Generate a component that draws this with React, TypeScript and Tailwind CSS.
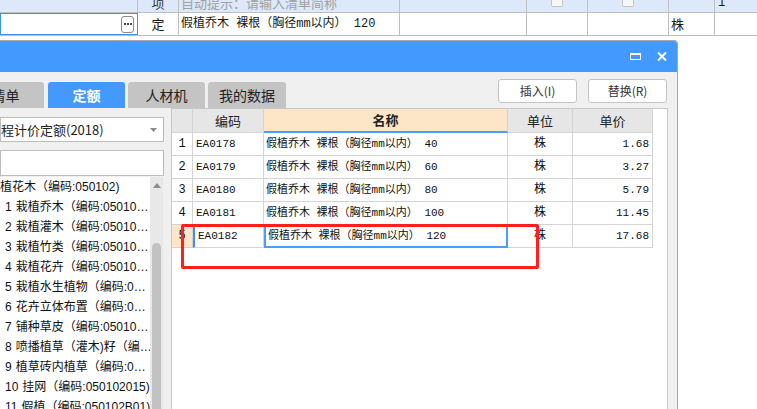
const cjk = "font-['Noto_Sans_CJK_SC',sans-serif]";
const mono = "font-['Liberation_Mono','Noto_Sans_CJK_SC',monospace]";

const rows = [
  { code: "EA0178", size: "40", price: "1.68" },
  { code: "EA0179", size: "60", price: "3.27" },
  { code: "EA0180", size: "80", price: "5.79" },
  { code: "EA0181", size: "100", price: "11.45" },
  { code: "EA0182", size: "120", price: "17.68" },
];

const tree = [
  { no: "", text: "植花木（编码:050102)" },
  { no: "1", text: "栽植乔木（编码:05010…" },
  { no: "2", text: "栽植灌木（编码:05010…" },
  { no: "3", text: "栽植竹类（编码:05010…" },
  { no: "4", text: "栽植花卉（编码:05010…" },
  { no: "5", text: "栽植水生植物（编码:0…" },
  { no: "6", text: "花卉立体布置（编码:0…" },
  { no: "7", text: "铺种草皮（编码:05010…" },
  { no: "8", text: "喷播植草（灌木)籽（编…" },
  { no: "9", text: "植草砖内植草（编码:0…" },
  { no: "10", text: "挂网（编码:050102015)" },
  { no: "11", text: "假植（编码:050102B01)" },
];

function Sheet() {
  return (
    <div className={`${cjk} text-[13px]`}>
      <div className="flex h-[13px] border-b border-[#c0c0c0] bg-[#dde8fb]">
        <div className="w-[138px] border-r border-[#c0c0c0]" />
        <div className="w-[41px] overflow-hidden border-r border-[#c0c0c0] text-center">
          <span className="-mt-[4px] block leading-[14px] text-[#333]">项</span>
        </div>
        <div className="w-[221px] overflow-hidden whitespace-nowrap border-r border-[#c0c0c0] pl-[2px]">
          <span className="-mt-[4px] block leading-[14px] text-[#a0a0a0]">自动提示：请输入清单简称</span>
        </div>
        <div className="w-[127px] border-r border-[#c0c0c0]" />
        <div className="w-[61px] overflow-hidden border-r border-[#c0c0c0] pl-[24px]">
          <div className="h-[7px] w-[12px] rounded-b-[2px] border border-t-0 border-[#c4c4c4] bg-[#f6f6f6]" />
        </div>
        <div className="w-[81px] overflow-hidden border-r border-[#c0c0c0] pl-[34px]">
          <div className="h-[7px] w-[12px] rounded-b-[2px] border border-t-0 border-[#c4c4c4] bg-[#f6f6f6]" />
        </div>
        <div className="w-[46px] border-r border-[#c0c0c0]" />
        <div className="flex-1 overflow-hidden pl-[3px]">
          <span className={`${mono} -mt-[4px] block text-[12px] leading-[14px]`}>1</span>
        </div>
      </div>
      <div className="flex h-[23px] border-b border-[#c0c0c0]">
        <div className="flex w-[138px] items-center justify-end border border-[#3d8ef5] pr-[3px]">
          <div className="flex h-[17px] w-[13px] items-center justify-center gap-[1px] rounded-[3px] border border-[#8a8a8a] bg-white">
            <span className="h-[2px] w-[2px] bg-[#444]" />
            <span className="h-[2px] w-[2px] bg-[#444]" />
            <span className="h-[2px] w-[2px] bg-[#444]" />
          </div>
        </div>
        <div className="flex w-[41px] items-center justify-center border-r border-[#c0c0c0]">定</div>
        <div className={`${mono} flex w-[221px] items-center whitespace-nowrap border-r border-[#c0c0c0] pl-[2px] text-[12px]`}>
          假植乔木 裸根（胸径mm以内） 120
        </div>
        <div className="w-[127px] border-r border-[#c0c0c0]" />
        <div className="w-[61px] border-r border-[#c0c0c0]" />
        <div className="w-[81px] border-r border-[#c0c0c0]" />
        <div className="flex w-[46px] items-center border-r border-[#c0c0c0] pl-[2px]">株</div>
        <div className="flex-1" />
      </div>
    </div>
  );
}

function Tabs() {
  return (
    <div className={`${cjk} flex h-[36px] justify-between pr-[10px]`}>
      <div className="flex items-end text-[14px]">
        <div className="-ml-[33px] flex h-[26px] w-[77px] items-center justify-center rounded-t-[3px] bg-[#c4c4c4] text-[#222]">清单</div>
        <div className="ml-[4px] flex h-[26px] w-[77px] items-center justify-center rounded-t-[3px] bg-[#4499ff] font-bold text-white">定额</div>
        <div className="ml-[3px] flex h-[26px] w-[77px] items-center justify-center rounded-t-[3px] bg-[#c4c4c4] text-[#222]">人材机</div>
        <div className="ml-[3px] flex h-[26px] w-[78px] items-center justify-center rounded-t-[3px] bg-[#c4c4c4] text-[#222]">我的数据</div>
      </div>
      <div className="mt-[7px] flex gap-[11px] text-[12px] text-[#333]">
        <button className="h-[24px] w-[79px] rounded-[3px] border border-[#c4c4c4] bg-white">插入(I)</button>
        <button className="h-[24px] w-[79px] rounded-[3px] border border-[#c4c4c4] bg-white">替换(R)</button>
      </div>
    </div>
  );
}

function LeftPanel() {
  return (
    <div className="flex w-[164px] flex-col">
      <div className={`${cjk} mt-[9px] flex h-[25px] items-center justify-between border border-[#bdbdbd] bg-white pr-[6px] text-[13px] text-[#222]`}>
        <span className="whitespace-nowrap">程计价定额(2018)</span>
        <svg width="7" height="4" viewBox="0 0 7 4">
          <path d="M0 0 H7 L3.5 4 Z" fill="#8a8a8a" />
        </svg>
      </div>
      <div className="mt-[8px] h-[26px] border border-[#bdbdbd] bg-white" />
      <div className="mt-[1px] flex flex-1 overflow-hidden">
        <div className="w-[150px] overflow-hidden bg-white font-['Liberation_Sans','Noto_Sans_CJK_SC',sans-serif] text-[12px] text-[#111]">
          {tree.map((t, i) => (
            <div key={i} className={`h-[20px] whitespace-nowrap leading-[20px] ${t.no ? "pl-[5px]" : ""}`}>
              {t.no && <span className="mr-[4px]">{t.no}</span>}
              {t.text}
            </div>
          ))}
        </div>
        <div className="flex w-[13px] flex-col bg-[#e8e8e8]">
          <div className="flex h-[16px] items-center justify-center">
            <svg width="8" height="5" viewBox="0 0 8 5">
              <path d="M0 5 L4 0 L8 5 Z" fill="#8c8c8c" />
            </svg>
          </div>
          <div className="h-[50px]" />
          <div className="mx-[2px] flex-1 rounded-t-full bg-[#c2c2c2]" />
        </div>
      </div>
    </div>
  );
}

function Table() {
  const cell = "border-r border-b border-[#d4d4d4]";
  return (
    <div className="ml-[7px] w-[497px] border-l border-r border-t border-[#c8c8c8] bg-white">
      <div className={`${cjk} grid h-[24px] grid-cols-[21px_71px_244px_65px_80px] text-[13px] text-[#222]`}>
        <div className={`${cell} bg-[#e6e6e6]`} />
        <div className={`${cell} flex items-center justify-center bg-[#e6e6e6]`}>编码</div>
        <div className="flex items-center justify-center border-b-2 border-r border-[#d4d4d4] border-b-[#4a9eff] bg-[#fde6c8] font-bold">名称</div>
        <div className={`${cell} flex items-center justify-center bg-[#e6e6e6]`}>单位</div>
        <div className={`${cell} flex items-center justify-center bg-[#e6e6e6]`}>单价</div>
      </div>
      {rows.map((r, i) => {
        const sel = i === 4;
        return (
          <div key={r.code} className={`${mono} grid h-[23px] grid-cols-[21px_71px_244px_65px_80px] text-[11px] text-[#111]`}>
            <div className={`${cell} flex items-center justify-center text-[12px] ${sel ? "bg-[#fde6c8]" : ""}`}>{i + 1}</div>
            <div className={`${cell} flex items-center pl-[3px] ${sel ? "border-l-2 border-l-[#3d8ef5] pl-[1px]" : ""}`}>{r.code}</div>
            <div className={`flex items-center whitespace-nowrap pl-[2px] ${sel ? "border-2 border-[#4a9eff] pl-[1px]" : cell}`}>
              假植乔木 裸根（胸径mm以内） {r.size}
            </div>
            <div className={`${cell} flex items-center justify-center text-[12px]`}>株</div>
            <div className={`${cell} flex items-center justify-end pr-[3px]`}>{r.price}</div>
          </div>
        );
      })}
    </div>
  );
}

function Dialog() {
  return (
    <div className="flex h-[369px] w-[678px] flex-col overflow-hidden rounded-tr-[4px] border-r border-t border-[#a8a8a8]">
      <div className="flex h-[31px] shrink-0 items-center justify-end gap-[16px] bg-[#4499ff] pr-[10px]">
        <div className="h-[7px] w-[11px] border-[1.5px] border-t-[2.5px] border-white" />
        <svg width="10" height="9" viewBox="0 0 10 9">
          <path d="M1 0.5 L9 8.5 M9 0.5 L1 8.5" stroke="white" strokeWidth="2" />
        </svg>
      </div>
      <div className="flex flex-1 flex-col bg-[#f0f0f0]">
        <Tabs />
        <div className="flex flex-1 overflow-hidden">
          <LeftPanel />
          <Table />
        </div>
      </div>
    </div>
  );
}

export default function App() {
  return (
    <div className="relative h-[409px] w-[757px] overflow-hidden bg-white text-[#1a1a1a]">
      <Sheet />
      <div className="h-[4px]" />
      <Dialog />
      <div className="pointer-events-none absolute left-[181px] top-[224px] h-[45px] w-[358px] rounded-[2px] border-[3px] border-[#ff1f1f]" />
    </div>
  );
}
